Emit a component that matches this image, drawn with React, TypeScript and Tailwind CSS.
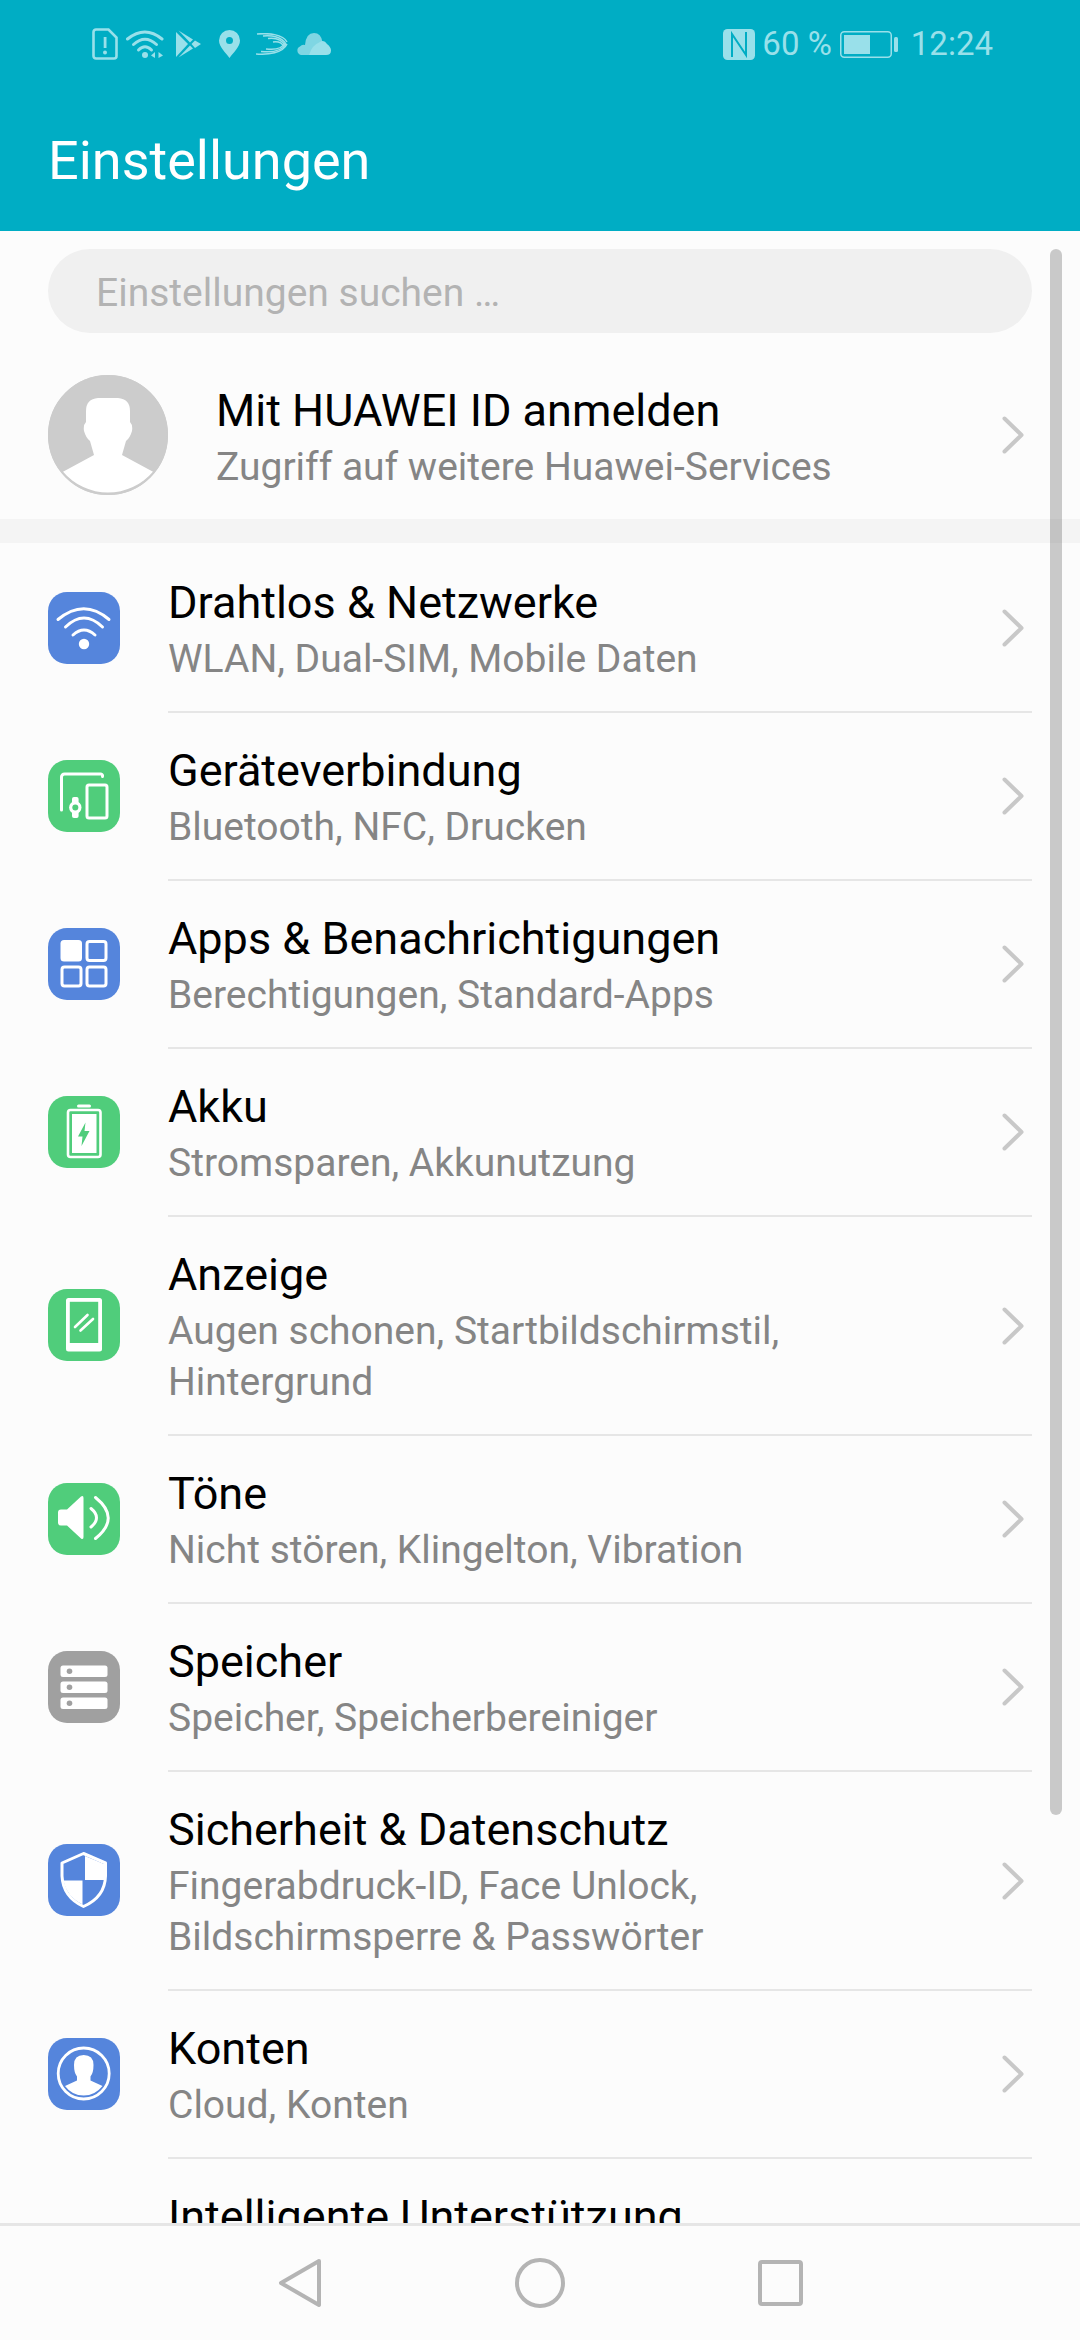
import React from 'react';

const BLUE = '#5585dc';
const GREEN = '#50cd7b';
const GRAY = '#a0a0a0';

const Tile: React.FC<{ color: string; children: React.ReactNode }> = ({ color, children }) => (
  <svg width="72" height="72" viewBox="0 0 72 72" className="shrink-0 mb-[3px]">
    <rect width="72" height="72" rx="19" fill={color} />
    {children}
  </svg>
);

const WifiIcon = () => (
  <Tile color={BLUE}>
    <g fill="none" stroke="#fff" strokeWidth="3" strokeLinecap="round">
      <path d="M10 27.500Q36 6 61 27.500" />
      <path d="M17.500 35Q36 17 54.500 35" />
      <path d="M25 43Q36 33 47 43" />
    </g>
    <circle cx="36" cy="52" r="5.200" fill="#fff" />
  </Tile>
);

const DevicesIcon = () => (
  <Tile color={GREEN}>
    <g fill="none" stroke="#fff" strokeWidth="3" strokeLinecap="round">
      <path d="M13.500 50V17a3 3 0 0 1 3-3H52a2 2 0 0 1 2.500 2.500" />
      <rect x="39" y="25" width="20" height="33" rx="2" />
    </g>
    <rect x="24" y="37" width="6.600" height="21" rx="2" fill="#fff" />
    <circle cx="27.300" cy="47.500" r="6.200" fill="#fff" />
    <circle cx="27.300" cy="47.500" r="3" fill={GREEN} />
  </Tile>
);

const AppsIcon = () => (
  <Tile color={BLUE}>
    <rect x="12.500" y="12" width="21.500" height="21.500" rx="3.500" fill="#fff" />
    <g fill="none" stroke="#fff" strokeWidth="3">
      <rect x="39" y="13.500" width="19" height="19" rx="2.500" />
      <rect x="14" y="39" width="19" height="19" rx="2.500" />
      <rect x="39" y="39" width="19" height="19" rx="2.500" />
    </g>
  </Tile>
);

const BatteryTileIcon = () => (
  <Tile color={GREEN}>
    <rect x="29" y="8.500" width="14" height="3" rx="1.500" fill="#fff" />
    <rect x="20" y="14" width="32.500" height="47" rx="2.500" fill="none" stroke="#fff" strokeWidth="2.600" />
    <rect x="24" y="18" width="24.500" height="39" fill="#fff" />
    <path d="M37.500 26.500L30 40.500H34.500L33.500 50L41.500 35H36.500Z" fill={GREEN} />
  </Tile>
);

const DisplayIcon = () => (
  <Tile color={GREEN}>
    <rect x="18" y="9" width="36" height="53.500" rx="2.500" fill="#fff" />
    <rect x="21.800" y="12.800" width="28.400" height="41.200" fill={GREEN} />
    <g stroke="#fff" strokeWidth="2.600" strokeLinecap="round">
      <path d="M27 38L39.500 26" />
      <path d="M32.500 41.500L45 30" />
    </g>
  </Tile>
);

const SoundIcon = () => (
  <Tile color={GREEN}>
    <path d="M13 26.500H19L33 13.500Q35.500 12 35.500 15V54Q35.500 57 33 55.500L19 42.500H13Q10 42.500 10 39.500V29.500Q10 26.500 13 26.500Z" fill="#fff" />
    <g fill="none" stroke="#fff" strokeWidth="3" strokeLinecap="round">
      <path d="M43 25.500Q54 34.500 43 44" />
      <path d="M47.500 14.500Q73 35 47.500 55.500" />
    </g>
  </Tile>
);

const StorageIcon = () => (
  <Tile color={GRAY}>
    {[14.5, 30.5, 46.5].map(y => (
      <g key={y}>
        <rect x="12.500" y={y} width="47" height="11.500" rx="2.500" fill="#fff" />
        <circle cx="21.500" cy={y + 5.75} r="2.800" fill={GRAY} />
      </g>
    ))}
  </Tile>
);

const ShieldIcon = () => (
  <Tile color={BLUE}>
    <path d="M35.500 9.500L14 19V32Q15 53 35.500 62.500Q57 53 57.500 32V19Z" fill="none" stroke="#fff" strokeWidth="3" strokeLinejoin="round" />
    <path d="M37 12L56 20V36H37Z" fill="#fff" />
    <path d="M34.500 36.500H15.500Q18.500 52.500 34.500 60.500Z" fill="#fff" />
  </Tile>
);

const AccountIcon = () => (
  <Tile color={BLUE}>
    <circle cx="35.700" cy="35.500" r="25.500" fill="none" stroke="#fff" strokeWidth="2.800" />
    <path d="M17 48L29 42.500V38.500Q26 35 26 27Q26 17 35.700 17Q45.500 17 45.500 27Q45.500 35 42.500 38.500V42.500L54.500 48Q47 57.500 35.700 57.500Q24 57.500 17 48Z" fill="#fff" />
  </Tile>
);

const Chevron = () => (
  <svg width="22" height="38" viewBox="0 0 22 38" className="shrink-0">
    <path d="M2.500 2.500L19.500 19L2.500 35.500" fill="none" stroke="#c8c8c8" strokeWidth="4" strokeLinecap="round" strokeLinejoin="round" />
  </svg>
);

const Avatar = () => (
  <svg width="120" height="120" viewBox="0 0 120 120" className="shrink-0">
    <circle cx="60" cy="60" r="60" fill="#cccccc" />
    <path d="M50 23Q38 24 38 36V47Q35 50 36 56Q38 63 42 66L46 80L15 96.700A59 59 0 0 0 105 96.700L74 80L78 66Q82 63 84 56Q85 50 82 47V36Q82 24 70 23Z" fill="#fff" />
    <circle cx="60" cy="60" r="59.200" fill="none" stroke="#cccccc" strokeWidth="1.600" />
  </svg>
);

const StatusLeft = () => {
  const c = '#99e0ea';
  return (
    <div className="flex items-center ml-[92px]">
      <svg width="26" height="32" viewBox="0 0 26 32">
        <path d="M4 1.500H16.500L24.500 9.500V28a2.500 2.500 0 0 1-2.500 2.500H4A2.500 2.500 0 0 1 1.500 28V4A2.500 2.500 0 0 1 4 1.500Z" fill="none" stroke={c} strokeWidth="2.600" />
        <rect x="11.700" y="9" width="2.800" height="11" fill={c} />
        <circle cx="13" cy="24.500" r="2" fill={c} />
      </svg>
      <svg width="38" height="30" viewBox="0 0 38 30" className="ml-[8px]">
        <g fill="none" stroke={c} strokeWidth="3" strokeLinecap="round">
          <path d="M1.500 10Q19 -4 36 10" />
          <path d="M7.500 15.500Q19 5 30.500 15.500" />
          <path d="M12.500 21Q19 14.500 25.500 21" />
        </g>
        <circle cx="19" cy="26" r="3" fill={c} />
        <path d="M29 23L25 26.500L29 29Z" fill={c} />
        <path d="M32.500 23L37 26.500L32.500 29Z" fill={c} />
      </svg>
      <svg width="25" height="28" viewBox="0 0 25 28" className="ml-[12px]">
        <path d="M0 2L12 14L0 27Z" fill={c} />
        <path d="M2.500 0.500L17 9.500L14 12.500Z" fill={c} />
        <path d="M19 10.500L25 14L19 18L15.500 14Z" fill={c} />
        <path d="M2.500 27.500L17 18.500L14 15.500Z" fill={c} />
      </svg>
      <svg width="21" height="28" viewBox="0 0 21 28" className="ml-[18px]">
        <path fillRule="evenodd" d="M10.500 0A10.500 10.500 0 0 1 21 10.500C21 17 14 23 10.500 28C7 23 0 17 0 10.500A10.500 10.500 0 0 1 10.500 0ZM10.500 7A3.500 3.500 0 1 0 10.500 14A3.500 3.500 0 1 0 10.500 7Z" fill={c} />
      </svg>
      <svg width="32" height="22" viewBox="0 0 32 22" className="ml-[16px]">
        <g fill="none" stroke={c} strokeWidth="1.500">
          <path d="M1 1C12 0 27 1 31 9" />
          <path d="M7 3C16 2 26 4 30 11" />
          <path d="M12 5.500C20 4.500 26 7 29 12.500" />
          <path d="M17 9C23 8 26 10 28 13.500" />
          <path d="M0 21C12 22 27 20 31 11" />
          <path d="M5 18.500C15 19.500 26 18 30 11" />
          <path d="M10 16C18 17 26 16 29 10" />
        </g>
      </svg>
      <svg width="34" height="22" viewBox="0 0 34 22" className="ml-[9px]">
        <path d="M4 22A4.500 4.500 0 0 1 3 13.500Q5 11 8 12Q9 0 17 0Q24 0 25.500 9L20 22Z" fill="#7fd6e3" />
        <path d="M12 22Q15 12 23 9Q27 6 30 11Q34 14 34 17.500Q34 22 29 22Z" fill={c} />
      </svg>
    </div>
  );
};

const StatusRight = () => {
  const c = '#99e0ea';
  return (
    <div className="flex items-center mr-[87px] text-[33px] leading-[40px] text-[#99e0ea]">
      <svg width="32" height="31" viewBox="0 0 32 31">
        <rect width="32" height="31" rx="4.500" fill={c} />
        <path d="M9 28V5L23 26V3" fill="none" stroke="#00adc4" strokeWidth="2" />
      </svg>
      <span className="ml-[7px]">60 %</span>
      <svg width="58" height="27" viewBox="0 0 58 27" className="ml-[8px]">
        <rect x="0.750" y="0.750" width="50.500" height="25.500" rx="3.500" fill="none" stroke={c} strokeWidth="1.500" />
        <rect x="4" y="4" width="26" height="19" fill={c} />
        <rect x="54" y="6" width="4" height="15" rx="1.500" fill={c} />
      </svg>
      <span className="ml-[13px]">12:24</span>
    </div>
  );
};

interface RowItem {
  icon: React.ReactNode;
  title: string;
  lines: string[];
}

const rows: RowItem[] = [
  { icon: <WifiIcon />, title: 'Drahtlos & Netzwerke', lines: ['WLAN, Dual-SIM, Mobile Daten'] },
  { icon: <DevicesIcon />, title: 'Geräteverbindung', lines: ['Bluetooth, NFC, Drucken'] },
  { icon: <AppsIcon />, title: 'Apps & Benachrichtigungen', lines: ['Berechtigungen, Standard-Apps'] },
  { icon: <BatteryTileIcon />, title: 'Akku', lines: ['Stromsparen, Akkunutzung'] },
  { icon: <DisplayIcon />, title: 'Anzeige', lines: ['Augen schonen, Startbildschirmstil,', 'Hintergrund'] },
  { icon: <SoundIcon />, title: 'Töne', lines: ['Nicht stören, Klingelton, Vibration'] },
  { icon: <StorageIcon />, title: 'Speicher', lines: ['Speicher, Speicherbereiniger'] },
  { icon: <ShieldIcon />, title: 'Sicherheit & Datenschutz', lines: ['Fingerabdruck-ID, Face Unlock,', 'Bildschirmsperre & Passwörter'] },
  { icon: <AccountIcon />, title: 'Konten', lines: ['Cloud, Konten'] },
];

const SettingsRow: React.FC<{ item: RowItem }> = ({ item }) => (
  <div className="flex items-center pl-[48px] pr-[48px]">
    {item.icon}
    <div className="flex flex-1 items-center ml-[48px] pt-[29px] pb-[26px] border-b-2 border-[#e6e6e6]">
      <div className="flex-1">
        <div className="text-[45px] leading-[57px] mb-[3px] text-black">{item.title}</div>
        {item.lines.map(line => (
          <div key={line} className="text-[39px] leading-[51px] text-[#858585]">{line}</div>
        ))}
      </div>
      <div className="mr-[8px] mb-[3px]">
        <Chevron />
      </div>
    </div>
  </div>
);

export default function App() {
  return (
    <div className="flex flex-col w-[1080px] h-[2340px] overflow-hidden bg-[#fcfcfc] font-['Roboto',sans-serif]">
      <header className="h-[231px] shrink-0 bg-[#00adc4]">
        <div className="flex items-center justify-between h-[88px]">
          <StatusLeft />
          <StatusRight />
        </div>
        <h1 className="ml-[48px] mt-[38px] text-[54px] leading-[70px] font-normal text-white">Einstellungen</h1>
      </header>

      <main className="relative flex-1 overflow-hidden">
        <div className="pt-[18px] px-[48px]">
          <div className="flex items-center h-[84px] rounded-[42px] bg-[#f0f0f0] pl-[48px] pt-[4px] text-[39px] text-[#b3b3b3]">
            Einstellungen suchen …
          </div>
        </div>

        <div className="flex items-center h-[186px] pt-[18px] pl-[48px] pr-[56px]">
          <Avatar />
          <div className="flex-1 ml-[48px] mt-[4px]">
            <div className="text-[45px] leading-[57px] mb-[3px] text-black">Mit HUAWEI ID anmelden</div>
            <div className="text-[39px] leading-[51px] text-[#858585]">Zugriff auf weitere Huawei-Services</div>
          </div>
          <Chevron />
        </div>

        <div className="h-[24px] bg-[#f4f4f4]" />

        <div className="pt-[2px]">
          {rows.map(item => (
            <SettingsRow key={item.title} item={item} />
          ))}
          <div className="pl-[168px] pt-[29px] text-[45px] leading-[57px] text-black">Intelligente Unterstützung</div>
        </div>

        <div className="absolute left-[1050px] top-[18px] w-[12px] h-[1566px] rounded-full bg-black/20" />
      </main>

      <nav className="flex items-center justify-center h-[117px] shrink-0 border-t-[3px] border-[#e6e6e6] bg-[#fcfcfc]">
        <div className="flex items-center gap-[193px]">
          <svg width="44" height="50" viewBox="0 0 44 50">
            <path d="M41 3L3 25L41 47Z" fill="none" stroke="#b4b4b4" strokeWidth="4" strokeLinejoin="round" />
          </svg>
          <svg width="50" height="50" viewBox="0 0 50 50">
            <circle cx="25" cy="25" r="23" fill="none" stroke="#b4b4b4" strokeWidth="4" />
          </svg>
          <svg width="45" height="46" viewBox="0 0 45 46">
            <rect x="2" y="2" width="41" height="42" rx="2" fill="none" stroke="#b4b4b4" strokeWidth="4" />
          </svg>
        </div>
      </nav>
    </div>
  );
}
